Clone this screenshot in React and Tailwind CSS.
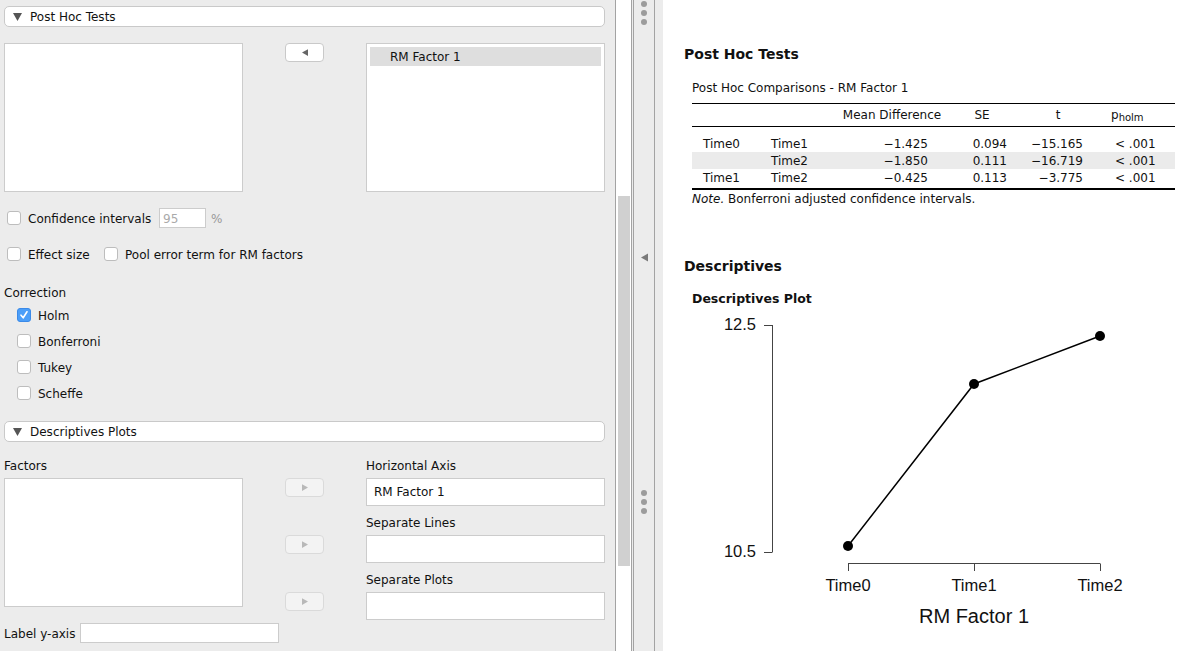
import React from "react";

const F = { fontFamily: '"DejaVu Sans", "Open Sans", sans-serif' };
const T = "leading-[14px] pt-[2px]";

function Tri({ dir = "down", color = "#555", w = 9, h = 8 }) {
  let pts = "0,0 9,0 4.5,8";
  if (dir === "left") pts = "8,0 8,9 0,4.5";
  if (dir === "right") pts = "0,0 0,9 8,4.5";
  const vb = dir === "down" ? "0 0 9 8" : "0 0 8 9";
  return (
    <svg width={w} height={h} viewBox={vb} className="block">
      <polygon points={pts} fill={color} />
    </svg>
  );
}

function Header({ title }) {
  return (
    <div className="h-[21px] bg-white border border-[#c9c9c9] rounded-[5px] flex items-center">
      <div className="ml-[8px] w-[9px]">
        <Tri dir="down" color="#555" w={9} h={8} />
      </div>
      <span className="ml-[8px] text-[12px] text-[#111]">{title}</span>
    </div>
  );
}

function ArrowBtn({ dir = "left", disabled = false }) {
  return (
    <div
      className={
        "w-[39px] h-[19px] rounded-[4px] border flex items-center justify-center " +
        (disabled ? "bg-[#f3f3f3] border-[#dadada]" : "bg-white border-[#c9c9c9]")
      }
    >
      <Tri dir={dir} color={disabled ? "#b8b8b8" : "#666"} w={6} h={7} />
    </div>
  );
}

function Check({ checked = false }) {
  if (checked) {
    return (
      <div className="w-[14px] h-[14px] rounded-[3px] bg-[#4b9ef8] border border-[#3b8ae8] flex items-center justify-center">
        <svg width="10" height="10" viewBox="0 0 10 10">
          <path d="M2 5.2 L4.2 7.8 L8 1.8" stroke="white" strokeWidth="1.6" fill="none" strokeLinecap="round" strokeLinejoin="round" />
        </svg>
      </div>
    );
  }
  return <div className="w-[14px] h-[14px] rounded-[3px] bg-white border border-[#bdbdbd]" />;
}

function CheckRow({ label, checked, className = "" }) {
  return (
    <div className={"h-[20px] flex items-center " + className}>
      <Check checked={checked} />
      <span className={"ml-[7px] text-[12px] text-[#111] " + T}>{label}</span>
    </div>
  );
}

function LeftPanel() {
  return (
    <div className="w-[615px] h-full bg-[#ececec] pl-[4px] pr-[10px] flex flex-col" style={F}>
      <div className="mt-[6px]">
        <Header title="Post Hoc Tests" />
      </div>
      <div className="mt-[16px] grid grid-cols-[239px_123px_239px] h-[149px]">
        <div className="bg-white border border-[#cccccc]" />
        <div className="flex justify-center items-start">
          <ArrowBtn dir="left" />
        </div>
        <div className="bg-white border border-[#cccccc] p-[3px]">
          <div className="h-[19px] bg-[#dedede] pl-[20px] flex items-center text-[12px] text-[#111]">
            RM Factor 1
          </div>
        </div>
      </div>
      <div className="mt-[16px] h-[20px] flex items-center">
        <div className="ml-[3px]">
          <Check />
        </div>
        <span className={"ml-[7px] text-[12px] text-[#111] w-[131px] " + T}>Confidence intervals</span>
        <div className="w-[47px] h-[20px] bg-white border border-[#cccccc] flex items-center pl-[3px] text-[12px] text-[#aaaaaa]">
          <span className={T}>95</span>
        </div>
        <span className={"ml-[5px] text-[12px] text-[#999] " + T}>%</span>
      </div>
      <div className="mt-[16px] h-[20px] flex items-center">
        <div className="ml-[3px] w-[97px]">
          <CheckRow label="Effect size" />
        </div>
        <CheckRow label="Pool error term for RM factors" />
      </div>
      <div className={"mt-[20px] h-[16px] text-[12px] text-[#111] " + T}>Correction</div>
      <div className="ml-[13px] mt-[5px] flex flex-col gap-[6px]">
        <CheckRow label="Holm" checked />
        <CheckRow label="Bonferroni" />
        <CheckRow label="Tukey" />
        <CheckRow label="Scheffe" />
      </div>
      <div className="mt-[18px]">
        <Header title="Descriptives Plots" />
      </div>
      <div className="mt-[15px] grid grid-cols-[239px_123px_239px]">
        <div className="flex flex-col">
          <div className={"h-[16px] text-[12px] text-[#111] " + T}>Factors</div>
          <div className="mt-[5px] h-[129px] bg-white border border-[#cccccc]" />
        </div>
        <div className="flex flex-col items-center pt-[21px]">
          <ArrowBtn dir="right" disabled />
          <div className="mt-[38px]">
            <ArrowBtn dir="right" disabled />
          </div>
          <div className="mt-[38px]">
            <ArrowBtn dir="right" disabled />
          </div>
        </div>
        <div className="flex flex-col">
          <div className={"h-[16px] text-[12px] text-[#111] " + T}>Horizontal Axis</div>
          <div className="mt-[5px] h-[28px] bg-white border border-[#cccccc] flex items-center pl-[7px] text-[12px] text-[#111]">
            RM Factor 1
          </div>
          <div className={"mt-[8px] h-[16px] text-[12px] text-[#111] " + T}>Separate Lines</div>
          <div className="mt-[5px] h-[28px] bg-white border border-[#cccccc]" />
          <div className={"mt-[8px] h-[16px] text-[12px] text-[#111] " + T}>Separate Plots</div>
          <div className="mt-[5px] h-[28px] bg-white border border-[#cccccc]" />
        </div>
      </div>
      <div className="mt-[3px] h-[20px] flex items-center">
        <span className={"text-[12px] text-[#111] w-[76px] " + T}>Label y-axis</span>
        <div className="w-[199px] h-[20px] bg-white border border-[#cccccc]" />
      </div>
    </div>
  );
}

function Dots() {
  return (
    <div className="flex flex-col items-center gap-[3px]">
      <div className="w-[6px] h-[6px] rounded-full bg-[#9c9c9c]" />
      <div className="w-[6px] h-[6px] rounded-full bg-[#9c9c9c]" />
      <div className="w-[6px] h-[6px] rounded-full bg-[#9c9c9c]" />
    </div>
  );
}

function Divider() {
  return (
    <div className="flex h-full">
      <div className="w-[17px] h-full bg-white border-l border-r border-[#a3a3a3]">
        <div className="ml-[2px] w-[12px] mt-[196px] h-[370px] bg-[#d0d0d0]" />
      </div>
      <div className="w-[1px] h-full bg-[#ececec]" />
      <div className="w-[22px] h-full bg-[#ececec] border-l border-r border-[#a3a3a3] flex flex-col items-center">
        <div className="mt-[1px]">
          <Dots />
        </div>
        <div className="mt-[228px]">
          <Tri dir="left" color="#7a7a7a" w={7} h={9} />
        </div>
        <div className="mt-[228px]">
          <Dots />
        </div>
      </div>
      <div className="w-[8px] h-full bg-[#ececec]" />
    </div>
  );
}

const rows = [
  ["Time0", "Time1", "\u22121.425", "0.094", "\u221215.165", "< .001", false],
  ["", "Time2", "\u22121.850", "0.111", "\u221216.719", "< .001", true],
  ["Time1", "Time2", "\u22120.425", "0.113", "\u22123.775", "< .001", false],
];

const cols = "grid grid-cols-[79px_65px_112px_68px_84px_75px]";

function Table() {
  return (
    <div className="ml-[8px] w-[483px]">
      <div className="border-t border-black" />
      <div className={cols + " h-[22px] items-center text-[12px] text-[#111]"}>
        <div />
        <div />
        <div className="text-center">Mean Difference</div>
        <div className="text-center">SE</div>
        <div className="text-center">t</div>
        <div className="pl-[11px]">
          p<span className="text-[10px] align-[-2px]">holm</span>
        </div>
      </div>
      <div className="border-t border-black" />
      <div className="h-[8px]" />
      {rows.map((r, i) => (
        <div
          key={i}
          className={cols + " h-[17px] items-center text-[12px] text-[#111] " + (r[6] ? "bg-[#ebebeb]" : "")}
        >
          <div className="pl-[11px]">{r[0]}</div>
          <div>{r[1]}</div>
          <div className="text-right pr-[20px]">{r[2]}</div>
          <div className="text-right pr-[9px]">{r[3]}</div>
          <div className="text-right pr-[17px]">{r[4]}</div>
          <div className="pl-[15px]">{r[5]}</div>
        </div>
      ))}
      <div className="h-[2px]" />
      <div className="border-t-2 border-black" />
      <div className="h-[18px] flex items-center text-[12px] text-[#111]">
        <span className="italic">Note.</span>
        <span>&nbsp;Bonferroni adjusted confidence intervals.</span>
      </div>
    </div>
  );
}

function Plot() {
  const A = { fontFamily: '"Liberation Sans", Arial, sans-serif' };
  const pts = [
    [156, 237],
    [282, 75],
    [408, 27],
  ];
  return (
    <svg width="490" height="340" className="block ml-[8px] mt-[2px]" style={A}>
      <line x1="80.5" y1="16" x2="80.5" y2="243" stroke="#444" strokeWidth="1" />
      <line x1="72" y1="16.5" x2="80.5" y2="16.5" stroke="#444" strokeWidth="1" />
      <line x1="72" y1="243.5" x2="80.5" y2="243.5" stroke="#444" strokeWidth="1" />
      <text x="64" y="21" textAnchor="end" fontSize="16.5" fill="#111">12.5</text>
      <text x="64" y="248" textAnchor="end" fontSize="16.5" fill="#111">10.5</text>
      <line x1="156" y1="254.5" x2="408" y2="254.5" stroke="#444" strokeWidth="1" />
      {[156, 282, 408].map((x) => (
        <line key={x} x1={x + 0.5} y1="254.5" x2={x + 0.5} y2="262" stroke="#444" strokeWidth="1" />
      ))}
      {["Time0", "Time1", "Time2"].map((t, i) => (
        <text key={t} x={156 + i * 126} y="282" textAnchor="middle" fontSize="16.5" fill="#111">
          {t}
        </text>
      ))}
      <text x="282" y="314" textAnchor="middle" fontSize="20" fill="#111">RM Factor 1</text>
      <polyline points={pts.map((p) => p.join(",")).join(" ")} fill="none" stroke="#000" strokeWidth="1.5" />
      {pts.map((p, i) => (
        <circle key={i} cx={p[0]} cy={p[1]} r="5" fill="#000" />
      ))}
    </svg>
  );
}

function RightPanel() {
  return (
    <div className="flex-1 h-full bg-white pl-[21px] flex flex-col" style={F}>
      <div className="mt-[45px] h-[18px] flex items-center text-[14px] font-bold text-[#111]">Post Hoc Tests</div>
      <div className="mt-[17px] ml-[8px] h-[16px] flex items-center text-[12px] text-[#111]">
        Post Hoc Comparisons - RM Factor 1
      </div>
      <div className="mt-[7px]">
        <Table />
      </div>
      <div className="mt-[49px] h-[18px] flex items-center text-[14px] font-bold text-[#111]">Descriptives</div>
      <div className="mt-[16px] ml-[8px] h-[16px] flex items-center text-[12.5px] font-bold text-[#111]">
        Descriptives Plot
      </div>
      <Plot />
    </div>
  );
}

export default function App() {
  return (
    <div className="w-[1193px] h-[651px] flex overflow-hidden bg-white">
      <LeftPanel />
      <Divider />
      <RightPanel />
    </div>
  );
}
